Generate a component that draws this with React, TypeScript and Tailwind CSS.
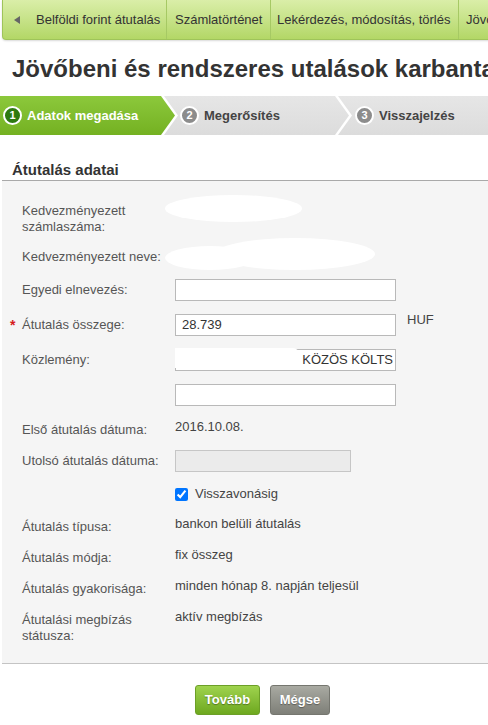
import { useState } from "react";

const tabs = [
  { label: "Belföldi forint átutalás", w: "w-[164px]", pl: "pl-[11px]", arrow: true },
  { label: "Számlatörténet", w: "w-[104px]", pl: "pl-[8px]", arrow: false },
  { label: "Lekérdezés, módosítás, törlés", w: "w-[188px]", pl: "pl-[6px]", arrow: false },
  { label: "Jövőbeni és rendszeres", w: "w-[200px]", pl: "pl-[7px]", arrow: false },
];

const infoRows = [
  { label: "Átutalás típusa:", value: "bankon belüli átutalás" },
  { label: "Átutalás módja:", value: "fix összeg" },
  { label: "Átutalás gyakorisága:", value: "minden hónap 8. napján teljesül" },
  { label: "Átutalási megbízás státusza:", value: "aktív megbízás", wrap: true },
];

function StepNumber({ n, active }: { n: number; active?: boolean }) {
  return (
    <span
      className={
        "flex h-[19px] w-[19px] shrink-0 items-center justify-center rounded-full border-[2px] border-white text-[11px] font-bold text-white " +
        (active ? "bg-[#2d7a10]" : "bg-[#8c8c8c]")
      }
    >
      {n}
    </span>
  );
}

function Steps() {
  return (
    <div className="mt-[13px] flex h-[39px] bg-white">
      {/* step 1 */}
      <div className="flex w-[175px] shrink-0 items-center gap-[5px] bg-gradient-to-b from-[#8cc83b] to-[#74b121] pl-[3px] [clip-path:polygon(0_0,161px_0,175px_50%,161px_100%,0_100%)]">
        <StepNumber n={1} active />
        <span className="text-[13px] font-bold text-white">Adatok megadása</span>
      </div>
      {/* step 2 */}
      <div className="-ml-[11px] flex w-[185px] shrink-0 items-center gap-[5px] bg-gradient-to-b from-[#e6e6e6] to-[#dcdcdc] pl-[16px] [clip-path:polygon(0_0,171px_0,185px_50%,171px_100%,0_100%,14px_50%)]">
        <StepNumber n={2} />
        <span className="text-[13px] font-bold text-[#444]">Megerősítés</span>
      </div>
      {/* step 3 */}
      <div className="-ml-[11px] flex flex-1 items-center gap-[5px] bg-gradient-to-b from-[#e6e6e6] to-[#dcdcdc] pl-[17px] [clip-path:polygon(0_0,100%_0,100%_100%,0_100%,14px_50%)]">
        <StepNumber n={3} />
        <span className="text-[13px] font-bold text-[#444]">Visszajelzés</span>
      </div>
    </div>
  );
}

function TextBox({ value = "", disabled }: { value?: string; disabled?: boolean }) {
  return (
    <div
      className={
        "flex h-[22px] items-center border px-[6px] text-[13px] text-[#333] " +
        (disabled ? "w-[176px] border-[#c6c6c6] bg-[#ebebeb]" : "w-[221px] border-[#b9b9b9] bg-white")
      }
    >
      {value}
    </div>
  );
}

export default function App() {
  const [checked, setChecked] = useState(true);

  return (
    <div className="w-[488px] overflow-hidden bg-white pb-[10px] font-['Liberation_Sans',Arial,sans-serif]">
      {/* Top tabs */}
      <div className="ml-[2px] flex h-[40px] w-[600px] rounded-bl-[4px] border border-t-0 border-[#9fc45a] bg-gradient-to-b from-[#daeea8] to-[#b3d766] shadow-[0_1px_2px_rgba(0,0,0,0.15)]">
        {tabs.map((tab) => (
          <div
            key={tab.label}
            className={`${tab.w} ${tab.pl} flex shrink-0 items-center whitespace-nowrap border-r border-[#a6c964] text-[13px] text-[#333]`}
          >
            {tab.arrow && (
              <svg width="6" height="8" viewBox="0 0 6 8" className="mr-[16px]">
                <path d="M6 0 L0 4 L6 8 Z" fill="#666" />
              </svg>
            )}
            {tab.label}
          </div>
        ))}
      </div>

      {/* Title */}
      <h1 className="mt-[15px] whitespace-nowrap pl-[12px] text-[24px] leading-[28px] font-bold text-[#333]">
        Jövőbeni és rendszeres utalások karbantartása
      </h1>

      <Steps />

      {/* Section header */}
      <div className="mt-[25px] ml-[2px] border-b border-[#a9a9a9] pl-[10px] text-[15px] leading-[20px] font-bold text-[#333]">
        Átutalás adatai
      </div>

      {/* Form panel */}
      <div className="ml-[2px] border-b border-[#c4c4c4] bg-[#f5f5f5] pt-[22px] pb-[19px] pl-[20px] text-[13px] leading-[16px] text-[#555]">
        {/* számlaszáma */}
        <div className="flex">
          <div className="w-[153px] shrink-0">
            Kedvezményezett
            <br />
            számlaszáma:
          </div>
          <div className="-mt-[8px] -ml-[10px] h-[27px] w-[137px] rounded-[50%] bg-white" />
        </div>

        {/* neve */}
        <div className="mt-[14px] flex h-[16px]">
          <div className="w-[153px] shrink-0">Kedvezményezett neve:</div>
          <div className="-mt-[11px] -ml-[10px] flex h-[32px] items-end">
            <div className="h-[24px] w-[90px] rounded-[50%] bg-white" />
            <div className="-ml-[40px] h-[32px] w-[160px] rounded-[50%] bg-white" />
          </div>
        </div>

        {/* egyedi elnevezés */}
        <div className="mt-[14px] flex items-center">
          <div className="w-[153px] shrink-0">Egyedi elnevezés:</div>
          <TextBox />
        </div>

        {/* összeg */}
        <div className="mt-[13px] flex items-start">
          <div className="flex w-[153px] shrink-0 items-center self-center">
            <span className="-ml-[12px] w-[12px] text-[14px] font-bold text-[#d51b1b]">*</span>
            Átutalás összege:
          </div>
          <TextBox value="28.739" />
          <span className="ml-[11px] -mt-[2px] text-[#444]">HUF</span>
        </div>

        {/* közlemény */}
        <div className="mt-[13px] flex items-center">
          <div className="w-[153px] shrink-0">Közlemény:</div>
          <div className="relative">
            <div className="flex h-[22px] w-[221px] items-center justify-end border border-[#b9b9b9] bg-white pr-[2px] text-[13px] text-[#333]">
              KÖZÖS KÖLTS
            </div>
            <div className="absolute top-[-1px] left-0 h-[20px] w-[124px] rounded-r-[6px] bg-white" />
          </div>
        </div>

        <div className="mt-[13px] flex items-center">
          <div className="w-[153px] shrink-0" />
          <TextBox />
        </div>

        {/* dátumok */}
        <div className="mt-[13px] flex items-start">
          <div className="w-[153px] shrink-0 pt-[3px]">Első átutalás dátuma:</div>
          <div className="text-[#444]">2016.10.08.</div>
        </div>

        <div className="mt-[12px] flex items-center">
          <div className="w-[153px] shrink-0">Utolsó átutalás dátuma:</div>
          <TextBox disabled />
        </div>

        <div className="mt-[14px] flex items-center">
          <div className="w-[153px] shrink-0" />
          <label className="flex items-center gap-[7px] text-[#444]">
            <input
              type="checkbox"
              checked={checked}
              onChange={(e) => setChecked(e.target.checked)}
              className="m-0 h-[13px] w-[13px] accent-[#0075ff]"
            />
            Visszavonásig
          </label>
        </div>

        {infoRows.map((row, i) => (
          <div key={row.label} className={(i === 0 ? "mt-[14px]" : "mt-[12px]") + " flex items-start"}>
            <div className="w-[153px] shrink-0 pt-[3px]">
              {row.wrap ? (
                <>
                  Átutalási megbízás
                  <br />
                  státusza:
                </>
              ) : (
                row.label
              )}
            </div>
            <div className="text-[#444]">{row.value}</div>
          </div>
        ))}
      </div>

      {/* Buttons */}
      <div className="mt-[21px] ml-[195px] flex gap-[10px]">
        <button className="h-[30px] w-[65px] rounded-[3px] border border-[#6c9f27] bg-gradient-to-b from-[#9fd34d] to-[#6ea81e] text-[13px] font-bold text-white [text-shadow:0_1px_1px_rgba(0,0,0,0.35)]">
          Tovább
        </button>
        <button className="h-[30px] w-[60px] rounded-[3px] border border-[#75766f] bg-gradient-to-b from-[#a9aaa2] to-[#7e7f78] text-[13px] font-bold text-white [text-shadow:0_1px_1px_rgba(0,0,0,0.35)]">
          Mégse
        </button>
      </div>
    </div>
  );
}
